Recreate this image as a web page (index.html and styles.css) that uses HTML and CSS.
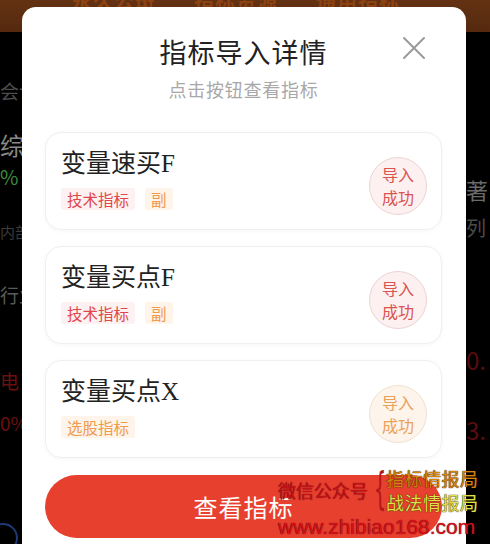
FILE: index.html
```html
<!DOCTYPE html>
<html lang="zh">
<head>
<meta charset="utf-8">
<title>指标导入详情</title>
<link rel="stylesheet" href="styles.css">
</head>
<body>
<div class="screen">
  <div class="topbar">
    <span>永久公斑</span><span>指标资源</span><span>通用指标</span>
  </div>
  <div class="under">
    <div class="side left">
      <span class="s-kj">会计</span>
      <span class="s-zong">综</span>
      <span class="s-pct">%</span>
      <span class="s-nb">内部</span>
      <span class="s-hy">行业</span>
      <span class="s-dian">电</span>
      <span class="s-zero">0%</span>
      <span class="s-ring"></span>
    </div>
    <div class="side right">
      <span class="r-zhu">著，</span>
      <span class="r-lie">列</span>
      <span class="r-a">0.</span>
      <span class="r-b">3.</span>
    </div>
  </div>

  <div class="modal">
    <div class="head">
      <h1 class="title">指标导入详情</h1>
      <p class="subtitle">点击按钮查看指标</p>
      <svg class="close" width="24" height="24" viewBox="0 0 24 24"><path d="M2 2 L22 22 M22 2 L2 22" stroke="#9a9a9a" stroke-width="2" fill="none" stroke-linecap="round"/></svg>
    </div>
    <div class="list">
      <div class="card">
        <div class="info">
          <div class="name">变量速买F</div>
          <div class="tags"><span class="tag red">技术指标</span><span class="tag orange">副</span></div>
        </div>
        <div class="badge red">导入<br>成功</div>
      </div>
      <div class="card">
        <div class="info">
          <div class="name">变量买点F</div>
          <div class="tags"><span class="tag red">技术指标</span><span class="tag orange">副</span></div>
        </div>
        <div class="badge red">导入<br>成功</div>
      </div>
      <div class="card">
        <div class="info">
          <div class="name">变量买点X</div>
          <div class="tags"><span class="tag orange">选股指标</span></div>
        </div>
        <div class="badge orange">导入<br>成功</div>
      </div>
    </div>
    <div class="btn">查看指标</div>
  </div>

  <div class="watermark">
    <span class="wm-left">微信公众号</span>
    <span class="wm-brace">{</span>
    <span class="wm-right">
      <span class="wm-a">指标情报局</span>
      <span class="wm-b">战法情报局</span>
    </span>
    <span class="wm-url">www.zhibiao168.com</span>
  </div>
</div>
</body>
</html>
```

FILE: styles.css
```css
* { box-sizing: border-box; }
html, body { margin: 0; padding: 0; }
body {
  width: 490px;
  height: 544px;
  overflow: hidden;
  background: #000;
  font-family: "Noto Sans CJK SC", "Noto Sans", sans-serif;
}
.screen {
  position: relative;
  width: 490px;
  height: 544px;
  overflow: hidden;
  background: #000;
}
.topbar {
  height: 32px;
  background: linear-gradient(#643213, #55290f);
  display: flex;
  gap: 38px;
  padding-left: 72px;
  overflow: hidden;
}
.topbar span {
  font-size: 20px;
  font-weight: 700;
  color: #8c4211;
  line-height: 20px;
  margin-top: -9px;
  letter-spacing: 1px;
}
.under {
  display: flex;
  justify-content: space-between;
  height: 512px;
}
.side {
  display: flex;
  flex-direction: column;
  overflow: hidden;
  white-space: nowrap;
}
.side.left { width: 22px; }
.side.right { width: 24px; }
.side span { display: block; line-height: 24px; font-size: 19px; }
.s-kj { margin-top: 47px; color: #4d4d4d; }
.s-zong { margin-top: 27px; font-size: 24px !important; line-height: 30px !important; color: #8a8a8a; }
.s-pct { margin-top: 5px; color: #3d8a3d; font-size: 20px !important; }
.s-nb { margin-top: 31px; color: #3a3a3a; font-size: 15px !important; }
.s-hy { margin-top: 39px; color: #5a5a5a; }
.s-dian { margin-top: 62px; color: #6b1010; }
.s-zero { margin-top: 18px; color: #6b1010; }
.s-ring {
  margin-top: 88px;
  width: 30px; height: 30px;
  border: 2px solid #1d3a78;
  border-radius: 50%;
  margin-left: -12px;
  flex-shrink: 0;
}
.r-zhu { margin-top: 145px; color: #6a6a6a; font-size: 22px !important; }
.r-lie { margin-top: 15px; color: #4a4a4a; font-size: 20px !important; }
.r-a { margin-top: 105px; color: #5a0c0c; font-size: 24px !important; line-height: 30px !important; }
.r-b { margin-top: 40px; color: #5a0c0c; font-size: 24px !important; line-height: 30px !important; }

.modal {
  position: absolute;
  left: 22px;
  top: 7px;
  width: 444px;
  height: 570px;
  background: #fff;
  border-radius: 14px;
  padding: 0 24px 0 23px;
}
.head {
  position: relative;
  text-align: center;
  padding-top: 27px;
}
.title {
  margin: 0;
  font-size: 27px;
  line-height: 36px;
  font-weight: 400;
  color: #222;
  letter-spacing: 1px;
}
.subtitle {
  margin: 7px 0 0;
  font-size: 18px;
  line-height: 24px;
  color: #a8a8a8;
  letter-spacing: 0.75px;
}
.close {
  position: absolute;
  right: 16px;
  top: 29px;
}
.list {
  margin-top: 31px;
  display: flex;
  flex-direction: column;
  gap: 16px;
}
.card {
  height: 98px;
  border: 1px solid #efefef;
  border-radius: 16px;
  box-shadow: 0 1px 4px rgba(0,0,0,0.04);
  display: flex;
  align-items: flex-start;
  justify-content: space-between;
  padding: 0 14px 0 15px;
}
.info {
  display: flex;
  flex-direction: column;
  margin-top: 15px;
}
.name {
  font-family: "Liberation Serif", "Noto Sans CJK SC", serif;
  font-size: 25px;
  line-height: 32px;
  color: #222;
}
.tags {
  display: flex;
  gap: 10px;
  margin-top: 8px;
}
.tag {
  font-size: 15.5px;
  line-height: 22px;
  padding: 0 6px;
  border-radius: 3px;
}
.tag.red { color: #e0474c; background: #fdf1f1; }
.tag.orange { color: #ef9a4e; background: #fef4ea; }
.badge {
  width: 58px;
  height: 58px;
  border-radius: 50%;
  display: flex;
  align-items: center;
  justify-content: center;
  text-align: center;
  font-size: 16px;
  line-height: 23px;
  margin-top: 24px;
}
.badge.red { color: #d9534f; background: #fdf0f0; border: 1px solid #edd3d3; }
.badge.orange { color: #eba05a; background: #fdf4eb; border: 1px solid #f1e1cf; }
.btn {
  margin-top: 17px;
  height: 63px;
  border-radius: 32px;
  background: #e8402f;
  color: #fff;
  font-size: 24px;
  display: flex;
  align-items: center;
  justify-content: center;
  letter-spacing: 1px;
}

.watermark {
  position: absolute;
  left: 278px;
  top: 466px;
  width: 212px;
  height: 78px;
  font-family: "Noto Sans CJK SC", sans-serif;
}
.wm-left {
  position: absolute;
  left: 0;
  top: 12px;
  font-size: 18px;
  line-height: 24px;
  color: #c8101a;
  text-shadow: 0 0 1px #400;
}
.wm-brace {
  position: absolute;
  left: 88px;
  top: -2px;
  font-family: "DejaVu Sans", sans-serif;
  font-size: 44px;
  line-height: 50px;
  color: #b01818;
  transform: scaleX(0.45);
}
.wm-right {
  position: absolute;
  left: 108px;
  top: 0;
  display: flex;
  flex-direction: column;
}
.wm-a, .wm-b { font-size: 18px; line-height: 24px; letter-spacing: 0.5px; }
.wm-a { color: #d6850e; text-shadow: 0 0 1px #402000, 0 0 1px #402000; }
.wm-b { color: #e2e04a; text-shadow: 0 0 1px #303000, 0 0 1px #303000; }
.wm-url {
  position: absolute;
  left: 0;
  top: 48px;
  font-family: "Liberation Sans", sans-serif;
  font-size: 21px;
  line-height: 26px;
  color: #d8101a;
  text-shadow: 0 0 1px #400;
}
```
